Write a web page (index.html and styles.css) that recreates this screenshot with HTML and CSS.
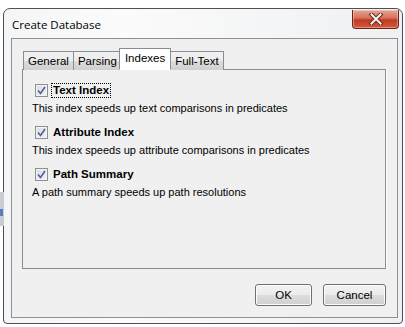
FILE: index.html
```html
<!DOCTYPE html>
<html lang="en">
<head>
    <meta charset="UTF-8">
    <title>Create Database</title>
    <link rel="stylesheet" href="styles.css">
</head>
<body>
    <div class="desk-strip"><i class="desk-icon"></i></div>
    <div class="window">
        <div class="titlebar">
            <span class="title">Create Database</span>
            <button class="close-btn">
                <svg width="16" height="12" viewBox="0 0 16 12">
                    <path d="M3.5 1.5 L12.5 10.5 M12.5 1.5 L3.5 10.5" stroke="#6a2a20" stroke-width="4" stroke-linecap="square"/>
                    <path d="M3.5 1.5 L12.5 10.5 M12.5 1.5 L3.5 10.5" stroke="#f4f4f4" stroke-width="2" stroke-linecap="square"/>
                </svg>
            </button>
        </div>
        <div class="client">
            <div class="tabs">
                <div class="tab">General</div>
                <div class="tab">Parsing</div>
                <div class="tab active">Indexes</div>
                <div class="tab">Full-Text</div>
            </div>
            <div class="panel">
                <div class="option">
                    <label class="check-row">
                        <span class="checkbox"><svg width="9" height="9" viewBox="0 0 9 9"><path d="M1 4.5 L3.5 7.5 L8 1" fill="none" stroke="#4b5fa8" stroke-width="1.6"/></svg></span>
                        <span class="check-label focused">Text Index</span>
                    </label>
                    <p class="desc">This index speeds up text comparisons in predicates</p>
                </div>
                <div class="option">
                    <label class="check-row">
                        <span class="checkbox"><svg width="9" height="9" viewBox="0 0 9 9"><path d="M1 4.5 L3.5 7.5 L8 1" fill="none" stroke="#4b5fa8" stroke-width="1.6"/></svg></span>
                        <span class="check-label">Attribute Index</span>
                    </label>
                    <p class="desc">This index speeds up attribute comparisons in predicates</p>
                </div>
                <div class="option">
                    <label class="check-row">
                        <span class="checkbox"><svg width="9" height="9" viewBox="0 0 9 9"><path d="M1 4.5 L3.5 7.5 L8 1" fill="none" stroke="#4b5fa8" stroke-width="1.6"/></svg></span>
                        <span class="check-label">Path Summary</span>
                    </label>
                    <p class="desc">A path summary speeds up path resolutions</p>
                </div>
            </div>
            <div class="buttons">
                <button class="btn btn-ok">OK</button>
                <button class="btn btn-cancel">Cancel</button>
            </div>
        </div>
    </div>
</body>
</html>
```

FILE: styles.css
```css
* {
    box-sizing: border-box;
    margin: 0;
    padding: 0;
}

body {
    width: 405px;
    height: 327px;
    background: #ffffff;
    font-family: "Liberation Sans", Arial, sans-serif;
    font-size: 11px;
    color: #000;
    overflow: hidden;
    position: relative;
}

/* bit of desktop peeking out on the left */
.desk-strip {
    position: absolute;
    left: 0;
    top: 192px;
    width: 4px;
    height: 34px;
    background: #c9ccd2;
    overflow: hidden;
}

.desk-icon {
    position: absolute;
    top: 17px;
    left: 0;
    width: 3px;
    height: 7px;
    background: #5a7cc0;
}

.window {
    margin: 8px 0 0 3px;
    width: 400px;
    height: 316px;
    border: 1px solid #4e5057;
    border-radius: 7px 7px 4px 4px;
    background: linear-gradient(90deg, #f4f5f6 0%, #fbfbfb 30%, #eef0f2 100%);
    display: flex;
    flex-direction: column;
    padding: 0 4px 5px 7px;
}

.titlebar {
    height: 29px;
    display: flex;
    align-items: flex-start;
    justify-content: space-between;
}

.title {
    margin-top: 8px;
    margin-left: 1px;
    font-family: "Open Sans", sans-serif;
    font-size: 11.5px;
    color: #000;
}

.close-btn {
    width: 47px;
    height: 19px;
    margin-top: 1px;
    margin-right: -1px;
    border: 1px solid #6b2219;
    border-top: none;
    border-radius: 0 0 4px 4px;
    background: linear-gradient(180deg, #e8a493 0%, #d5705a 45%, #c2391f 55%, #d45a3a 100%);
    display: flex;
    align-items: center;
    justify-content: center;
    box-shadow: inset 0 0 0 1px rgba(255, 255, 255, 0.35);
}

.client {
    flex: 1;
    border: 1px solid #8d9095;
    background: #f0f0f0;
    padding: 8px 11px 0 10px;
    display: flex;
    flex-direction: column;
}

.tabs {
    display: flex;
    align-items: flex-end;
    height: 23px;
    padding-left: 1px;
    position: relative;
    z-index: 1;
}

.tab {
    height: 19px;
    padding: 0 4px;
    border: 1px solid #898c95;
    border-bottom: none;
    margin-right: -1px;
    background: linear-gradient(180deg, #f2f2f2 0%, #ebebeb 50%, #dddddd 51%, #cfcfcf 100%);
    font-size: 11.5px;
    line-height: 19px;
    color: #000;
}

.tab.active {
    background: #ffffff;
    padding: 0 5px;
    line-height: 19px;
    margin: 0 -1px 0 -2px;
    position: relative;
    height: 22px;
    border-bottom: 1px solid #ffffff;
}

.panel {
    height: 200px;
    border: 1px solid #898c95;
    margin-top: -1px;
    background: #f0f0f0;
    box-shadow: 1px 0 0 #ffffff;
    padding: 13px 0 0 9px;
}

.option {
    margin-bottom: 10px;
}

.check-row {
    display: flex;
    align-items: center;
    gap: 3px;
    margin-left: 3px;
    height: 14px;
}

.checkbox {
    width: 13px;
    height: 13px;
    border: 1px solid #8e8f8f;
    background: linear-gradient(135deg, #dcdcdc 0%, #f2f2f2 100%);
    box-shadow: inset 0 0 0 1px #f4f4f4;
    display: flex;
    align-items: center;
    justify-content: center;
}

.check-label {
    font-weight: bold;
    font-size: 11.5px;
    line-height: 13px;
    padding: 0 1px;
    border: 1px dotted transparent;
}

.check-label.focused {
    border-color: #000;
}

.desc {
    margin-top: 5px;
    font-size: 11px;
    line-height: 13px;
}

.buttons {
    display: flex;
    justify-content: flex-end;
    gap: 11px;
    margin-top: 15px;
}

.btn {
    height: 22px;
    border: 1px solid #707070;
    border-radius: 3px;
    background: linear-gradient(180deg, #f2f2f2 0%, #ebebeb 50%, #dddddd 51%, #cfcfcf 100%);
    box-shadow: inset 0 0 0 1px #fcfcfc;
    font-family: "Liberation Sans", Arial, sans-serif;
    font-size: 11.5px;
    color: #000;
}

.btn-ok {
    width: 57px;
}

.btn-cancel {
    width: 63px;
}
```
